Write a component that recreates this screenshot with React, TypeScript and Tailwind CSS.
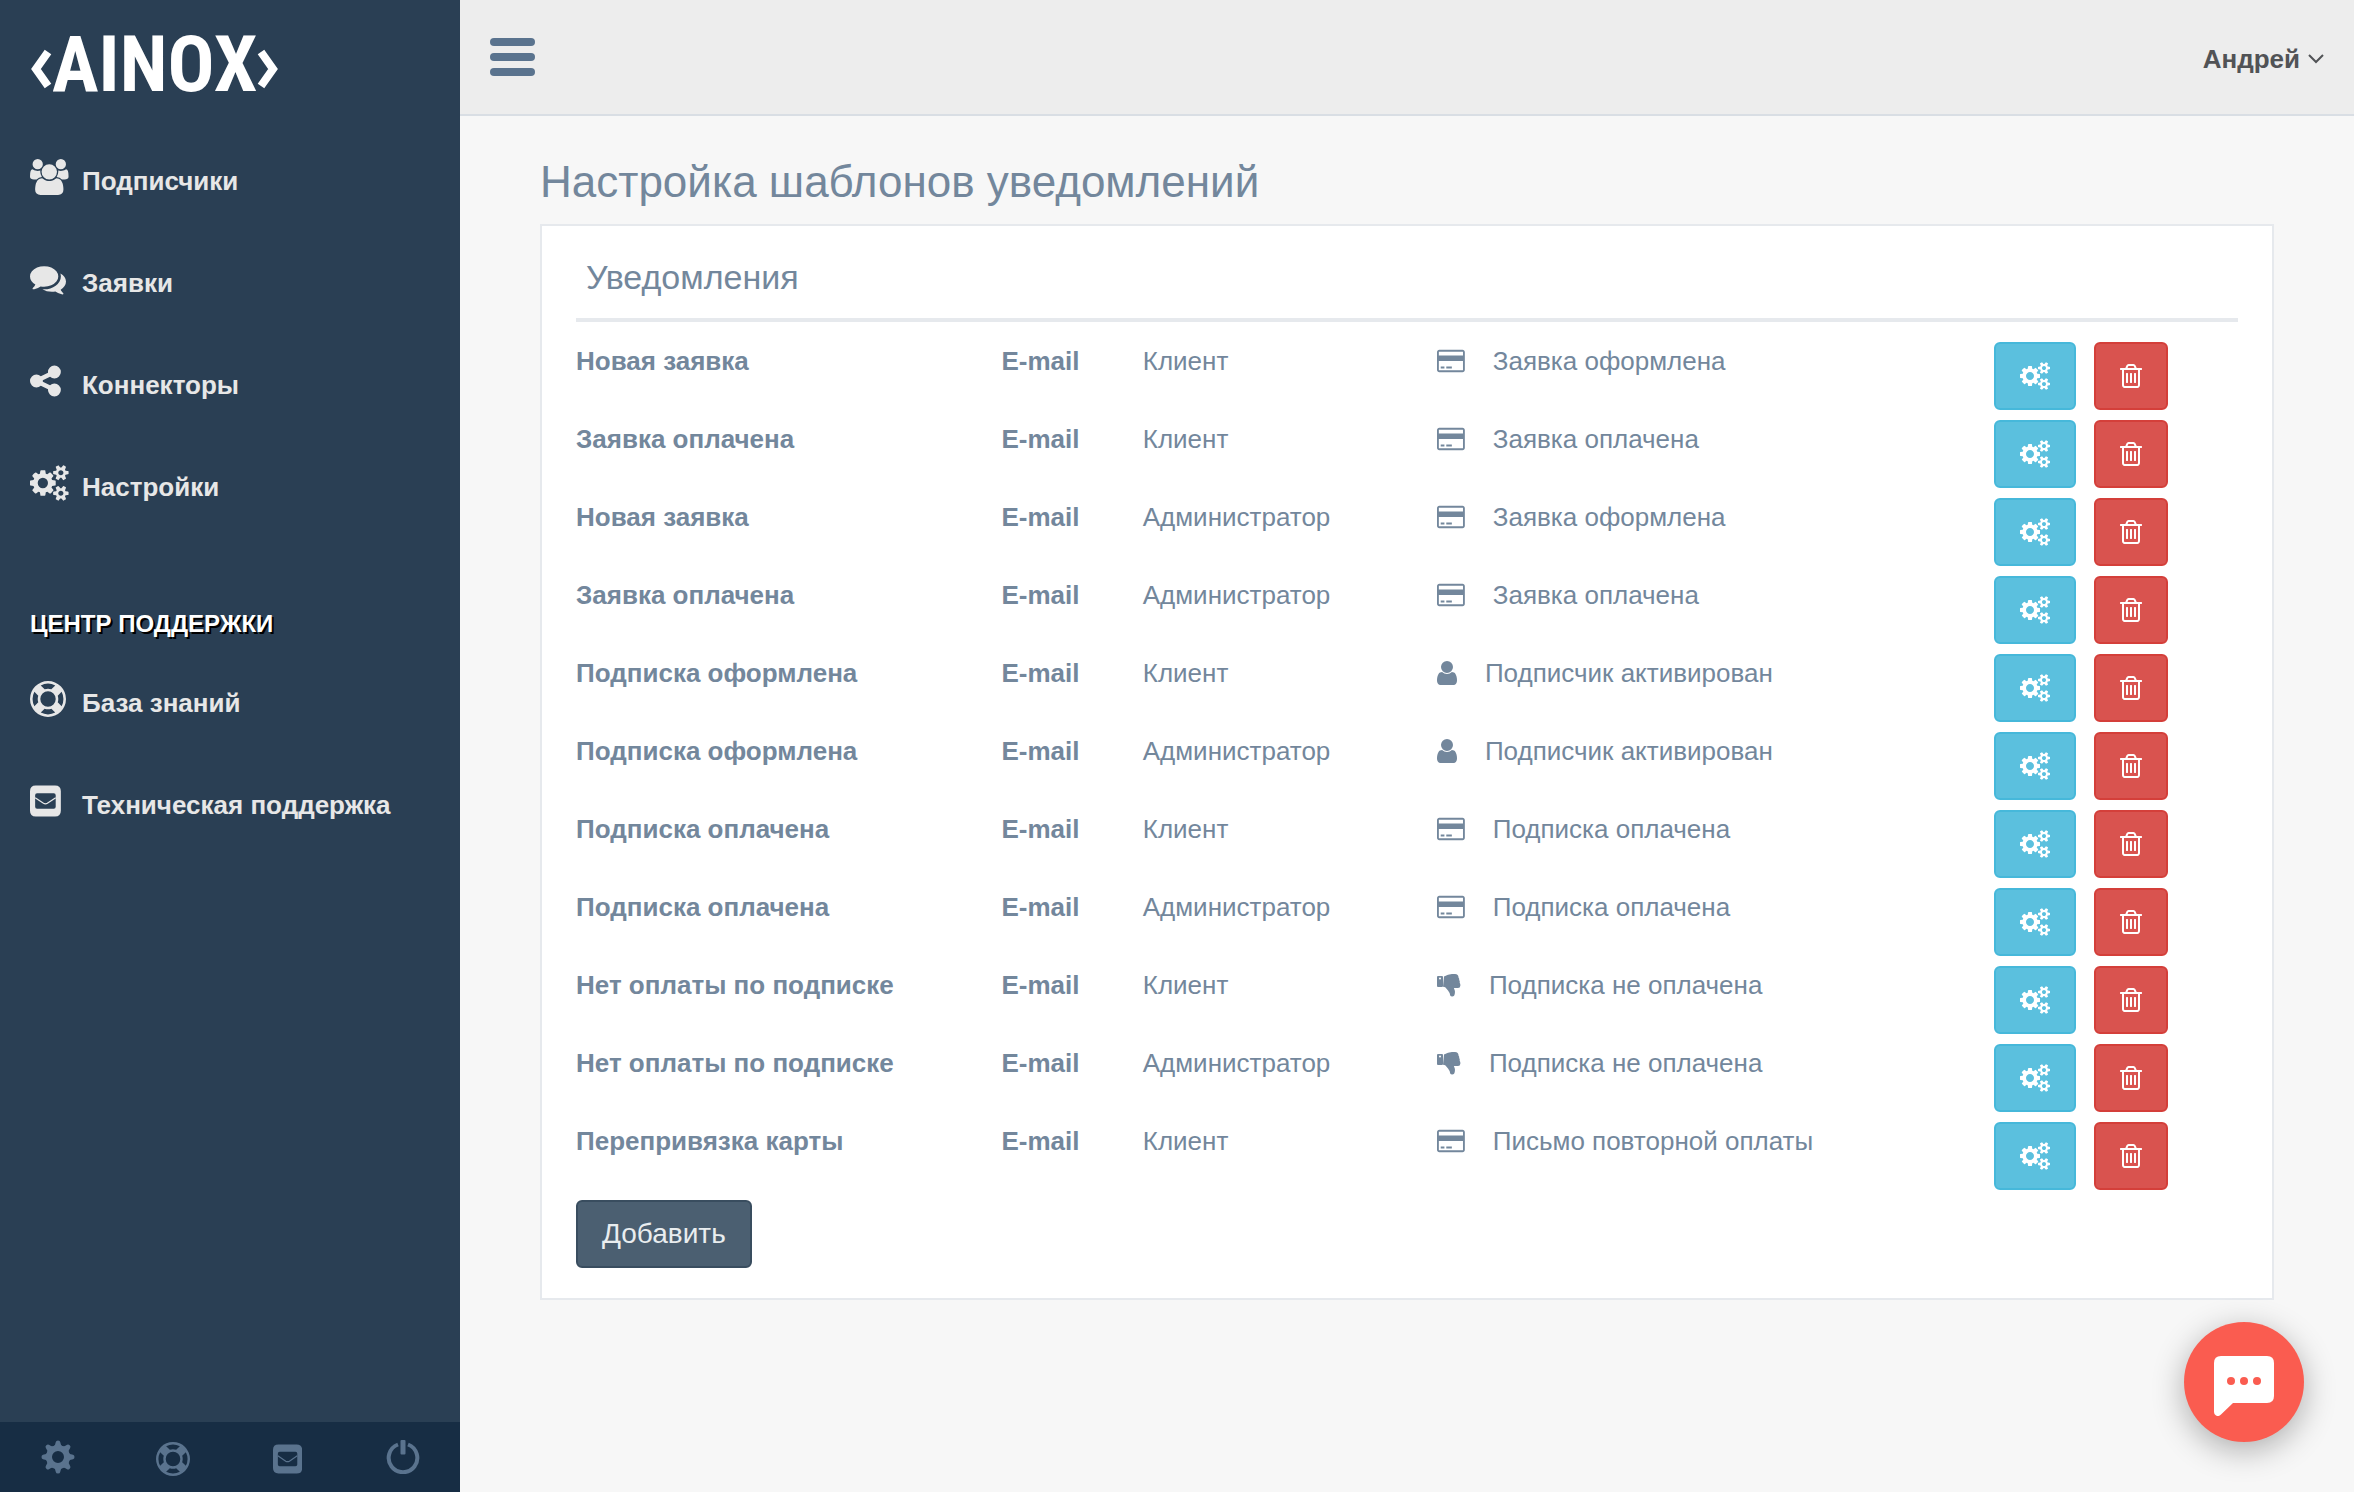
import React from 'react';

type GlyphProps = { className?: string };

const CogsIcon = ({ className }: GlyphProps) => (
  <svg viewBox="0 0 1920 1792" fill="currentColor" aria-hidden="true" className={className}>
    <path d="M896 896q0-106-75-181t-181-75-181 75-75 181 75 181 181 75 181-75 75-181zm768 512q0-52-38-90t-90-38-90 38-38 90q0 53 37.500 90.500t90.500 37.500 90.500-37.500 37.500-90.500zm0-1024q0-52-38-90t-90-38-90 38-38 90q0 53 37.500 90.500t90.500 37.500 90.500-37.500 37.500-90.500zm-384 421v185q0 10-7 19.500t-16 10.500l-155 24q-11 35-32 76 34 48 90 115 7 11 7 20 0 12-7 19-23 30-82.500 89.500t-78.500 59.500q-11 0-21-7l-115-90q-37 19-77 31-11 108-23 155-7 24-30 24h-186q-11 0-20-7.500t-10-17.500l-23-153q-34-10-75-31l-118 89q-7 7-20 7-11 0-21-8-144-133-144-160 0-9 7-19 10-14 41-53t47-61q-23-44-35-82l-152-24q-10-1-17-9.500t-7-19.500v-185q0-10 7-19.500t16-10.500l155-24q11-35 32-76-34-48-90-115-7-11-7-20 0-12 7-20 22-30 82-89t79-59q11 0 21 7l115 90q34-18 77-32 11-108 23-154 7-24 30-24h186q11 0 20 7.500t10 17.500l23 153q34 10 75 31l118-89q8-7 20-7 11 0 21 8 144 133 144 160 0 8-7 19-12 16-42 54t-45 60q23 48 34 82l152 23q10 2 17 10.500t7 19.500zm640 533v140q0 16-149 31-12 27-30 52 51 113 51 138 0 4-4 7-122 71-124 71-8 0-46-47t-52-68q-20 2-30 2t-30-2q-14 21-52 68t-46 47q-2 0-124-71-4-3-4-7 0-25 51-138-18-25-30-52-149-15-149-31v-140q0-16 149-31 13-29 30-52-51-113-51-138 0-4 4-7 4-2 35-20t59-34 30-16q8 0 46 46.500t52 67.500q20-2 30-2t30 2q51-71 92-112l6-2q4 0 124 70 4 3 4 7 0 25-51 138 17 23 30 52 149 15 149 31zm0-1024v140q0 16-149 31-12 27-30 52 51 113 51 138 0 4-4 7-122 71-124 71-8 0-46-47t-52-68q-20 2-30 2t-30-2q-14 21-52 68t-46 47q-2 0-124-71-4-3-4-7 0-25 51-138-18-25-30-52-149-15-149-31v-140q0-16 149-31 13-29 30-52-51-113-51-138 0-4 4-7 4-2 35-20t59-34 30-16q8 0 46 46.500t52 67.500q20-2 30-2t30 2q51-71 92-112l6-2q4 0 124 70 4 3 4 7 0 25-51 138 17 23 30 52 149 15 149 31z" />
  </svg>
);

const UsersIcon = ({ className }: GlyphProps) => (
  <svg viewBox="0 0 1920 1792" fill="currentColor" aria-hidden="true" className={className}>
    <path d="M593 896q-162 5-265 128h-134q-82 0-138-40.500t-56-118.500q0-353 124-353 6 0 43.500 21t97.500 42.500 119 21.500q67 0 133-23-5 37-5 66 0 139 81 256zm1071 637q0 120-73 189.500t-194 69.500h-874q-121 0-194-69.500t-73-189.500q0-53 3.500-103.500t14-109 26.500-108.500 43-97.500 62-81 85.500-53.500 111.500-20q10 0 43 21.500t73 48 107 48 135 21.500 135-21.500 107-48 73-48 43-21.500q61 0 111.500 20t85.500 53.500 62 81 43 97.500 26.500 108.500 14 109 3.500 103.500zm-1024-1277q0 106-75 181t-181 75-181-75-75-181 75-181 181-75 181 75 75 181zm704 384q0 159-112.500 271.500t-271.500 112.500-271.500-112.500-112.500-271.500 112.500-271.500 271.500-112.500 271.500 112.500 112.500 271.500zm576 225q0 78-56 118.500t-138 40.500h-134q-103-123-265-128 81-117 81-256 0-29-5-66 66 23 133 23 59 0 119-21.500t97.500-42.500 43.500-21q124 0 124 353zm-128-609q0 106-75 181t-181 75-181-75-75-181 75-181 181-75 181 75 75 181z" />
  </svg>
);

const CommentsIcon = ({ className }: GlyphProps) => (
  <svg viewBox="0 0 1792 1792" fill="currentColor" aria-hidden="true" className={className}>
    <path d="M1408 768q0 139-94 257t-256.500 186.500-353.500 68.500q-86 0-176-16-124 88-278 128-36 9-86 16h-3q-11 0-20.500-8t-11.500-21q-1-3-1-6.500t.5-6.500 2-6l2.500-5 3.500-5.500 4-5 4.500-5 4-4.500q5-6 23-25t26-29.500 22.500-29 25-38.500 20.500-44q-124-72-195-177t-71-224q0-139 94-257t256.500-186.500 353.500-68.500 353.500 68.500 256.500 186.500 94 257zm384 256q0 120-71 224.500t-195 176.500q10 24 20.500 44t25 38.500 22.500 29 26 29.500 23 25q1 1 4 4.500t4.500 5 4 5 3.500 5.500l2.500 5 2 6 .5 6.500-1 6.500q-3 14-13 22t-22 7q-50-7-86-16-154-40-278-128-90 16-176 16-271 0-472-132 58 4 88 4 161 0 309-45t264-129q125-92 192-212t67-254q0-77-23-152 129 71 204 178t75 230z" />
  </svg>
);

const ShareIcon = ({ className }: GlyphProps) => (
  <svg viewBox="128 0 1536 1792" fill="currentColor" aria-hidden="true" className={className}>
    <path d="M1344 1024q133 0 226.500 93.500t93.500 226.500-93.500 226.500-226.500 93.500-226.500-93.500-93.500-226.500q0-12 2-34l-360-180q-92 86-218 86-133 0-226.500-93.500t-93.500-226.500 93.500-226.500 226.500-93.500q126 0 218 86l360-180q-2-22-2-34 0-133 93.500-226.500t226.500-93.500 226.500 93.500 93.500 226.500-93.500 226.500-226.500 93.500q-126 0-218-86l-360 180q2 22 2 34t-2 34l360 180q92-86 218-86z" />
  </svg>
);

const LifeRingIcon = ({ className }: GlyphProps) => (
  <svg viewBox="0 0 1792 1792" fill="currentColor" aria-hidden="true" className={className}>
    <path d="M896 0q182 0 348 71t286 191 191 286 71 348-71 348-191 286-286 191-348 71-348-71-286-191-191-286-71-348 71-348 191-286 286-191 348-71zm0 128q-190 0-361 90l194 194q82-28 167-28t167 28l194-194q-171-90-361-90zm-678 1129l194-194q-28-82-28-167t28-167l-194-194q-90 171-90 361t90 361zm678 407q190 0 361-90l-194-194q-82 28-167 28t-167-28l-194 194q171 90 361 90zm0-384q159 0 271.500-112.500t112.500-271.500-112.500-271.500-271.500-112.500-271.500 112.500-112.500 271.500 112.500 271.500 271.500 112.500zm484-217l194 194q90-171 90-361t-90-361l-194 194q28 82 28 167t-28 167z" />
  </svg>
);

const MailSquareIcon = ({ className }: GlyphProps) => (
  <svg viewBox="128 0 1536 1792" fill="currentColor" aria-hidden="true" className={className}>
    <path
      fillRule="evenodd"
      d="M416 128h960q288 0 288 288v960q0 288-288 288h-960q-288 0-288-288v-960q0-288 288-288zM480 512q-96 0-96 96v576q0 96 96 96h832q96 0 96-96v-576q0-96-96-96z"
    />
    <path d="M384 730L800 1010q96 60 192 0L1408 730" fill="none" stroke="currentColor" strokeWidth="64" />
  </svg>
);

const CreditCardIcon = ({ className }: GlyphProps) => (
  <svg viewBox="0 0 1920 1792" fill="currentColor" aria-hidden="true" className={className}>
    <path d="M1760 128q66 0 113 47t47 113v1216q0 66-47 113t-113 47h-1600q-66 0-113-47t-47-113v-1216q0-66 47-113t113-47h1600zm-1600 128q-13 0-22.500 9.500t-9.500 22.500v224h1664v-224q0-13-9.500-22.500t-22.500-9.500h-1600zm1600 1280q13 0 22.500-9.500t9.500-22.500v-608h-1664v608q0 13 9.500 22.500t22.500 9.500h1600zm-1504-128v-128h256v128h-256zm384 0v-128h384v128h-384z" />
  </svg>
);

const UserIcon = ({ className }: GlyphProps) => (
  <svg viewBox="256 0 1280 1792" fill="currentColor" aria-hidden="true" className={className}>
    <path d="M1536 1399q0 109-62.500 187t-150.500 78h-854q-88 0-150.500-78t-62.500-187q0-85 8.500-160.500t31.500-152 58.500-131 94-89 134.500-34.500q131 128 313 128t313-128q76 0 134.500 34.500t94 89 58.500 131 31.500 152 8.500 160.500zm-256-887q0 159-112.500 271.500t-271.500 112.500-271.500-112.500-112.500-271.500 112.500-271.500 271.500-112.500 271.500 112.500 112.500 271.500z" />
  </svg>
);

const ThumbsDownIcon = ({ className }: GlyphProps) => (
  <svg viewBox="0 0 24 26" fill="currentColor" aria-hidden="true" className={className}>
    <path
      fillRule="evenodd"
      d="M1 4h4q1 0 1 1v9q0 1-1 1h-4q-1 0-1-1v-9q0-1 1-1zM3 5.500a1 1 0 1 0 0 2a1 1 0 1 0 0-2z"
    />
    <path d="M7 4.500Q11 2 15 2h3q3.500 0 3.500 3.500q1 1 .7 2.500q.9 1.200.5 2.700q.8 1 .7 2.800q-.2 2.500-2.400 2.500h-4.100q1.200 2.500 1 5q-.3 3.500-2.700 3.500q-1.500 0-2-1q-.7-3.500-2.200-5l-2.500-3q-.8-.8-2.500-.8z" />
  </svg>
);

const TrashIcon = ({ className }: GlyphProps) => (
  <svg viewBox="192 0 1408 1792" fill="currentColor" aria-hidden="true" className={className}>
    <path d="M704 736v576q0 14-9 23t-23 9h-64q-14 0-23-9t-9-23v-576q0-14 9-23t23-9h64q14 0 23 9t9 23zm256 0v576q0 14-9 23t-23 9h-64q-14 0-23-9t-9-23v-576q0-14 9-23t23-9h64q14 0 23 9t9 23zm256 0v576q0 14-9 23t-23 9h-64q-14 0-23-9t-9-23v-576q0-14 9-23t23-9h64q14 0 23 9t9 23zm128 724v-948h-896v948q0 22 7 40.500t14.500 27 10.500 8.500h832q3 0 10.500-8.500t14.500-27 7-40.500zm-672-1076h448l-48-117q-7-9-17-11h-317q-10 2-17 11zm928 32v64q0 14-9 23t-23 9h-96v948q0 83-47 143.500t-113 60.500h-832q-66 0-113-58.500t-47-141.500v-952h-96q-14 0-23-9t-9-23v-64q0-14 9-23t23-9h309l70-167q15-37 54-63t79-26h320q40 0 79 26t54 63l70 167h309q14 0 23 9t9 23z" />
  </svg>
);

const CogIcon = ({ className }: GlyphProps) => (
  <svg viewBox="-17 -17 34 34" aria-hidden="true" className={className}>
    <circle r="9" fill="none" stroke="currentColor" strokeWidth="6" />
    {[0, 45, 90, 135, 180, 225, 270, 315].map((angle) => (
      <path
        key={angle}
        d="M-5-10Q-2.500-11.500-2.200-15Q-2-16.500 0-16.500T2.200-15Q2.500-11.500 5-10z"
        fill="currentColor"
        transform={`rotate(${angle})`}
      />
    ))}
  </svg>
);

const PowerIcon = ({ className }: GlyphProps) => (
  <svg viewBox="0 0 34 34" fill="none" stroke="currentColor" aria-hidden="true" className={className}>
    <path d="M12 4.500A14.300 14.300 0 1 0 22 4.500" strokeWidth="4" />
    <rect x="14.500" y="0" width="5" height="14.500" rx="1" fill="currentColor" stroke="none" />
  </svg>
);

const mainMenu = [
  { label: 'Подписчики', icon: <UsersIcon className="h-9" /> },
  { label: 'Заявки', icon: <CommentsIcon className="h-9" /> },
  { label: 'Коннекторы', icon: <ShareIcon className="h-9" /> },
  { label: 'Настройки', icon: <CogsIcon className="h-9" /> },
];

const supportMenu = [
  { label: 'База знаний', icon: <LifeRingIcon className="h-9" /> },
  { label: 'Техническая поддержка', icon: <MailSquareIcon className="h-9" /> },
];

const footerLinks = [
  { label: 'Настройки', icon: <CogIcon className="h-[34px]" /> },
  { label: 'База знаний', icon: <LifeRingIcon className="mt-1 h-[34px]" /> },
  { label: 'Техническая поддержка', icon: <MailSquareIcon className="mt-1 h-[34px]" /> },
  { label: 'Выход', icon: <PowerIcon className="h-[34px]" /> },
];

const eventIcons = {
  card: <CreditCardIcon className="h-[26px]" />,
  user: <UserIcon className="h-7" />,
  down: <ThumbsDownIcon className="h-[26px]" />,
};

type Template = { name: string; to: string; icon: keyof typeof eventIcons; event: string };

const templates: Template[] = [
  { name: 'Новая заявка', to: 'Клиент', icon: 'card', event: 'Заявка оформлена' },
  { name: 'Заявка оплачена', to: 'Клиент', icon: 'card', event: 'Заявка оплачена' },
  { name: 'Новая заявка', to: 'Администратор', icon: 'card', event: 'Заявка оформлена' },
  { name: 'Заявка оплачена', to: 'Администратор', icon: 'card', event: 'Заявка оплачена' },
  { name: 'Подписка оформлена', to: 'Клиент', icon: 'user', event: 'Подписчик активирован' },
  { name: 'Подписка оформлена', to: 'Администратор', icon: 'user', event: 'Подписчик активирован' },
  { name: 'Подписка оплачена', to: 'Клиент', icon: 'card', event: 'Подписка оплачена' },
  { name: 'Подписка оплачена', to: 'Администратор', icon: 'card', event: 'Подписка оплачена' },
  { name: 'Нет оплаты по подписке', to: 'Клиент', icon: 'down', event: 'Подписка не оплачена' },
  { name: 'Нет оплаты по подписке', to: 'Администратор', icon: 'down', event: 'Подписка не оплачена' },
  { name: 'Перепривязка карты', to: 'Клиент', icon: 'card', event: 'Письмо повторной оплаты' },
];

function Menu({ items }: { items: { label: string; icon: React.ReactNode }[] }) {
  return (
    <ul>
      {items.map((item) => (
        <li key={item.label}>
          <a href="#" className="flex h-[102px] items-center px-[30px] text-[26px] font-bold text-[#e7e7e7]">
            <span className="mb-2 w-[52px] shrink-0">{item.icon}</span>
            {item.label}
          </a>
        </li>
      ))}
    </ul>
  );
}

function Sidebar() {
  return (
    <aside className="flex w-[460px] shrink-0 flex-col bg-[#2a3f54]">
      <a href="#" className="flex h-[130px] items-center px-[30px] text-white">
        <svg viewBox="0 0 22 40" fill="none" stroke="currentColor" strokeWidth="8" aria-hidden="true" className="mt-2 h-10">
          <path d="M18 3L6 20L18 37" />
        </svg>
        <span className="font-['Roboto_Condensed','Open_Sans_Condensed','Liberation_Sans_Narrow',sans-serif] text-[78px] leading-none font-bold">AINOX</span>
        <svg viewBox="0 0 22 40" fill="none" stroke="currentColor" strokeWidth="8" aria-hidden="true" className="mt-2 h-10">
          <path d="M4 3L16 20L4 37" />
        </svg>
      </a>
      <nav>
        <Menu items={mainMenu} />
        <h3 className="mt-[70px] mb-3 px-[30px] text-[24px] leading-8 font-bold text-white uppercase [text-shadow:2px_2px_#000]">
          Центр поддержки
        </h3>
        <Menu items={supportMenu} />
      </nav>
      <div className="mt-auto grid h-[70px] grid-cols-4 bg-[#172d44] text-[#5a738e]">
        {footerLinks.map((link) => (
          <a key={link.label} href="#" aria-label={link.label} className="flex items-center justify-center">
            {link.icon}
          </a>
        ))}
      </div>
    </aside>
  );
}

function TopBar() {
  return (
    <header className="flex h-[116px] items-center justify-between border-b-2 border-[#d9dee4] bg-[#ededed] px-[30px]">
      <button type="button" aria-label="Меню" className="flex w-[45px] flex-col gap-[7px]">
        <span className="h-2 rounded-sm bg-[#5a738e]" />
        <span className="h-2 rounded-sm bg-[#5a738e]" />
        <span className="h-2 rounded-sm bg-[#5a738e]" />
      </button>
      <button type="button" className="flex items-center gap-2 pt-1 text-[26px] font-bold text-[#515356]">
        Андрей
        <svg viewBox="0 0 16 10" fill="none" stroke="currentColor" strokeWidth="2" aria-hidden="true" className="w-4">
          <path d="M1 1L8 8L15 1" />
        </svg>
      </button>
    </header>
  );
}

function TemplatesTable() {
  return (
    <table className="w-full table-fixed text-left text-[26px] leading-[38px]">
      <colgroup>
        <col className="w-[25.6%]" />
        <col className="w-[8.5%]" />
        <col className="w-[17.7%]" />
        <col className="w-[33.5%]" />
        <col />
      </colgroup>
      <tbody>
        {templates.map((row, index) => (
          <tr key={index} className="h-[78px] align-top">
            <th scope="row" className="font-bold">{row.name}</th>
            <td className="font-bold">E-mail</td>
            <td>{row.to}</td>
            <td>
              <span className="flex items-center gap-7">
                {eventIcons[row.icon]}
                {row.event}
              </span>
            </td>
            <td>
              <div className="flex gap-[18px]">
                <button
                  type="button"
                  aria-label="Настроить"
                  className="flex h-[68px] w-[82px] items-center justify-center rounded-md border-2 border-[#46b8da] bg-[#5bc0de] text-white"
                >
                  <CogsIcon className="h-7" />
                </button>
                <button
                  type="button"
                  aria-label="Удалить"
                  className="flex h-[68px] w-[74px] items-center justify-center rounded-md border-2 border-[#d43f3a] bg-[#d9534f] text-white"
                >
                  <TrashIcon className="h-7" />
                </button>
              </div>
            </td>
          </tr>
        ))}
      </tbody>
    </table>
  );
}

export default function App() {
  return (
    <div className="flex min-h-screen bg-[#f7f7f7] font-['Liberation_Sans',Arial,sans-serif] text-[#73879c]">
      <Sidebar />
      <div className="min-w-0 flex-1">
        <TopBar />
        <main className="px-20 pt-9">
          <h1 className="mb-3 text-[44px] leading-[60px] font-medium">Настройка шаблонов уведомлений</h1>
          <section className="border-2 border-[#e6e9ed] bg-white px-[34px] pb-[30px]">
            <h2 className="mb-5 border-b-4 border-[#e6e9ed] pt-[26px] pb-4 pl-[10px] text-[34px] leading-[50px] font-medium">
              Уведомления
            </h2>
            <TemplatesTable />
            <button
              type="button"
              className="h-[68px] rounded-md border-2 border-[#394d5f] bg-[#4b5f71] px-6 text-[28px] text-[#e9edef]"
            >
              Добавить
            </button>
          </section>
        </main>
      </div>
      <button
        type="button"
        aria-label="Открыть чат"
        className="fixed right-[50px] bottom-[50px] flex size-[120px] items-center justify-center rounded-full bg-[#fa5c50] text-white shadow-[0_8px_32px_rgba(0,0,0,0.3)]"
      >
        <svg viewBox="0 0 60 60" fill="currentColor" aria-hidden="true" className="mt-2 size-[60px]">
          <path d="M7 0H53Q60 0 60 7V40Q60 47 53 47H19L7 58.500Q4.500 61 2 59.500Q0 58.500 0 56V7Q0 0 7 0z" />
          <circle cx="17" cy="25" r="4" fill="#fa5c50" />
          <circle cx="30" cy="25" r="4" fill="#fa5c50" />
          <circle cx="43" cy="25" r="4" fill="#fa5c50" />
        </svg>
      </button>
    </div>
  );
}
